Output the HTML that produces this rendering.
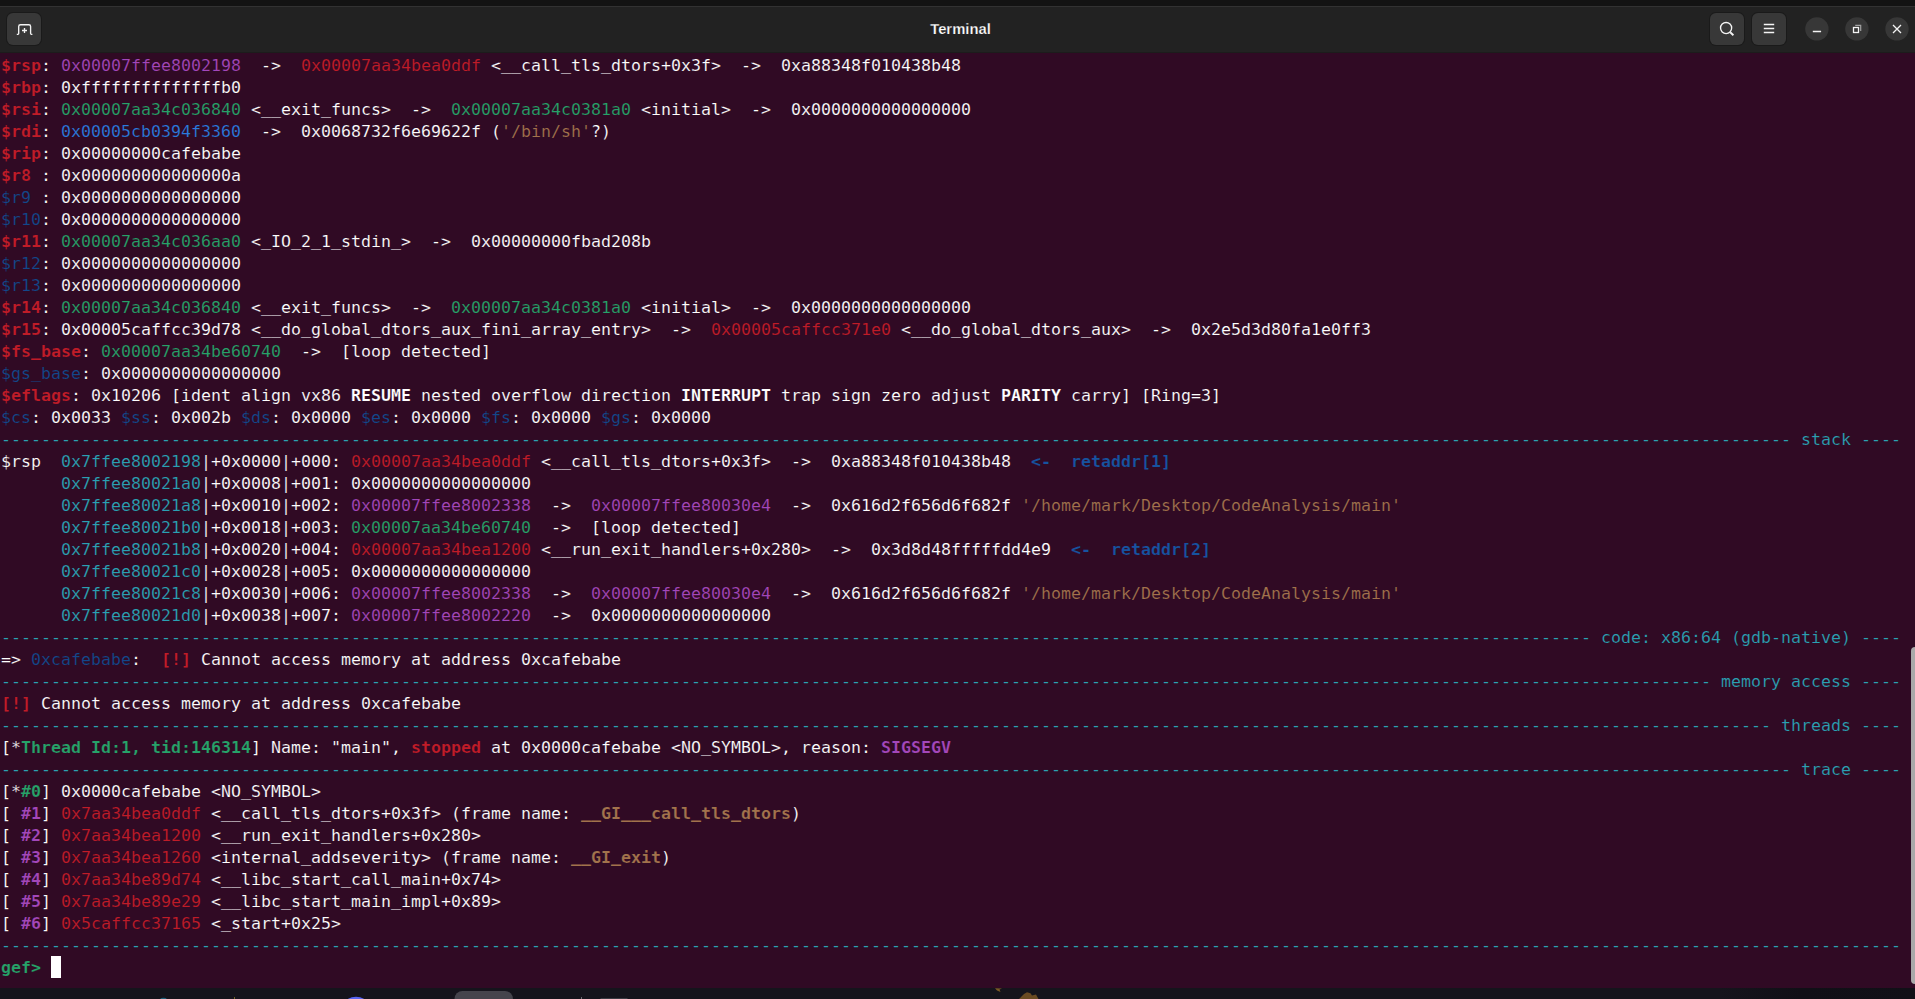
<!DOCTYPE html>
<html lang="en">
<head>
<meta charset="utf-8">
<title>Terminal</title>
<style>
html,body{margin:0;padding:0;}
body{width:1915px;height:999px;overflow:hidden;background:#15141c;position:relative;font-family:"Liberation Sans",sans-serif;}
#top{position:absolute;left:0;top:0;width:1915px;height:6px;background:#131313;}
#hl{position:absolute;left:0;top:6px;width:1915px;height:1px;background:#323232;}
#hdr{position:absolute;left:0;top:7px;width:1915px;height:45px;background:#222222;}
#hb{position:absolute;left:0;top:52px;width:1915px;height:1px;background:#1c1c1c;}
#title{position:absolute;left:0;top:7px;width:1921px;height:45px;line-height:44px;text-align:center;color:#ffffff;font-weight:bold;font-size:14.8px;letter-spacing:0;-webkit-text-stroke:0.25px #222222;}
svg.ic{position:absolute;left:0;top:0;overflow:visible;}
#term{position:absolute;left:0;top:53px;width:1915px;height:935px;background:#300a24;}
#txt{position:absolute;left:1px;top:55px;margin:0;color:#ffffff;font-family:"DejaVu Sans Mono","Liberation Mono",monospace;font-size:16.61px;line-height:22px;white-space:pre;-webkit-text-stroke:0.15px #300a24;}
#txt div{height:22px;}
#txt b{font-weight:bold;}
.R{color:#c01c28;font-weight:bold}
.r{color:#c01c28}
.g{color:#26a269}
.G{color:#26a269;font-weight:bold}
.b{color:#12488b}
.B{color:#1653a0;font-weight:bold}
.l{color:#2a7bde}
.m{color:#a347ba}
.M{color:#a347ba;font-weight:bold}
.c{color:#2aa1b3}
.y{color:#a2734c}
.u{position:relative;top:-1px;-webkit-text-stroke:0}
.Y{color:#a2734c;font-weight:bold}
#cur{position:absolute;left:51px;top:956px;width:10px;height:22px;background:#ffffff;}
#sb{position:absolute;left:1911px;top:647px;width:8px;height:337px;border-radius:4px;background:#a9a9a9;}
#desk{position:absolute;left:0;top:988px;width:1915px;height:11px;background:linear-gradient(90deg,#15141c 0,#15141c 1720px,#100f16 1800px,#111017 1915px);overflow:hidden;}
</style>
</head>
<body>
<div id="top"></div><div id="hl"></div><div id="hdr"></div><div id="hb"></div>
<div id="title">Terminal</div>
<svg class="ic" width="1915" height="53" viewBox="0 0 1915 53" fill="none" stroke="#f4f4f4" stroke-width="1.35" stroke-linecap="butt">
<g stroke="none">
<rect x="6" y="12" width="36" height="34" rx="7" fill="#1a1a1a"/><rect x="7" y="13" width="34" height="32" rx="6" fill="#383838"/>
<rect x="1709" y="12" width="36" height="34" rx="7" fill="#1a1a1a"/><rect x="1710" y="13" width="34" height="32" rx="6" fill="#383838"/>
<rect x="1751" y="12" width="36" height="34" rx="7" fill="#1a1a1a"/><rect x="1752" y="13" width="34" height="32" rx="6" fill="#383838"/>
<circle cx="1816.9" cy="28.9" r="11.7" fill="#373737"/>
<circle cx="1856.9" cy="28.9" r="11.7" fill="#373737"/>
<circle cx="1897" cy="28.9" r="11.7" fill="#373737"/>
</g>
<path d="M16.8 34.3H17.9Q18.7 34.3 18.7 33.5V26.5Q18.7 24.7 20.5 24.7H28.8Q30.6 24.7 30.6 26.5V33.5Q30.6 34.3 31.4 34.3H32.4"/>
<path d="M22 30.5H27M24.5 28V33"/>
<circle cx="1726.1" cy="28" r="5.55"/>
<path d="M1730.2 32.2L1733.4 35.2" stroke-width="1.9"/>
<path d="M1763.8 24.5H1774.2M1763.8 28.5H1774.2M1763.8 32.5H1774.2"/>
<path d="M1812.8 31.5H1821.1" stroke-width="1.5"/>
<path d="M1855.2 25.3H1860.7V30.9" stroke="#a2a2a2" stroke-width="1.2"/>
<rect x="1853.5" y="27.5" width="5" height="5" stroke-width="1.3"/>
<path d="M1893 25L1901 33M1901 25L1893 33" stroke-width="1.3"/>
</svg>
<div id="term"></div>
<div id="txt"><div><span class="R">$rsp</span>: <span class="m">0x00007ffee8002198</span>  -&gt;  <span class="r">0x00007aa34bea0ddf</span> &lt;<span class="u">__</span>call<span class="u">_</span>tls<span class="u">_</span>dtors+0x3f&gt;  -&gt;  0xa88348f010438b48</div><div><span class="R">$rbp</span>: 0xffffffffffffffb0</div><div><span class="R">$rsi</span>: <span class="g">0x00007aa34c036840</span> &lt;<span class="u">__</span>exit<span class="u">_</span>funcs&gt;  -&gt;  <span class="g">0x00007aa34c0381a0</span> &lt;initial&gt;  -&gt;  0x0000000000000000</div><div><span class="R">$rdi</span>: <span class="l">0x00005cb0394f3360</span>  -&gt;  0x0068732f6e69622f (<span class="y">'/bin/sh'</span>?)</div><div><span class="R">$rip</span>: 0x00000000cafebabe</div><div><span class="R">$r8 </span>: 0x000000000000000a</div><div><span class="b">$r9 </span>: 0x0000000000000000</div><div><span class="b">$r10</span>: 0x0000000000000000</div><div><span class="R">$r11</span>: <span class="g">0x00007aa34c036aa0</span> &lt;<span class="u">_</span>IO<span class="u">_</span>2<span class="u">_</span>1<span class="u">_</span>stdin<span class="u">_</span>&gt;  -&gt;  0x00000000fbad208b</div><div><span class="b">$r12</span>: 0x0000000000000000</div><div><span class="b">$r13</span>: 0x0000000000000000</div><div><span class="R">$r14</span>: <span class="g">0x00007aa34c036840</span> &lt;<span class="u">__</span>exit<span class="u">_</span>funcs&gt;  -&gt;  <span class="g">0x00007aa34c0381a0</span> &lt;initial&gt;  -&gt;  0x0000000000000000</div><div><span class="R">$r15</span>: 0x00005caffcc39d78 &lt;<span class="u">__</span>do<span class="u">_</span>global<span class="u">_</span>dtors<span class="u">_</span>aux<span class="u">_</span>fini<span class="u">_</span>array<span class="u">_</span>entry&gt;  -&gt;  <span class="r">0x00005caffcc371e0</span> &lt;<span class="u">__</span>do<span class="u">_</span>global<span class="u">_</span>dtors<span class="u">_</span>aux&gt;  -&gt;  0x2e5d3d80fa1e0ff3</div><div><span class="R">$fs<span class="u">_</span>base</span>: <span class="g">0x00007aa34be60740</span>  -&gt;  [loop detected]</div><div><span class="b">$gs<span class="u">_</span>base</span>: 0x0000000000000000</div><div><span class="R">$eflags</span>: 0x10206 [ident align vx86 <b>RESUME</b> nested overflow direction <b>INTERRUPT</b> trap sign zero adjust <b>PARITY</b> carry] [Ring=3]</div><div><span class="b">$cs</span>: 0x0033 <span class="b">$ss</span>: 0x002b <span class="b">$ds</span>: 0x0000 <span class="b">$es</span>: 0x0000 <span class="b">$fs</span>: 0x0000 <span class="b">$gs</span>: 0x0000</div><div><span class="c">----------------------------------------------------------------------------------------------------------------------------------------------------------------------------------- stack ----</span></div><div>$rsp  <span class="c">0x7ffee8002198</span>|+0x0000|+000: <span class="r">0x00007aa34bea0ddf</span> &lt;<span class="u">__</span>call<span class="u">_</span>tls<span class="u">_</span>dtors+0x3f&gt;  -&gt;  0xa88348f010438b48  <span class="B">&lt;-  retaddr[1]</span></div><div>      <span class="c">0x7ffee80021a0</span>|+0x0008|+001: 0x0000000000000000</div><div>      <span class="c">0x7ffee80021a8</span>|+0x0010|+002: <span class="m">0x00007ffee8002338</span>  -&gt;  <span class="m">0x00007ffee80030e4</span>  -&gt;  0x616d2f656d6f682f <span class="y">'/home/mark/Desktop/CodeAnalysis/main'</span></div><div>      <span class="c">0x7ffee80021b0</span>|+0x0018|+003: <span class="g">0x00007aa34be60740</span>  -&gt;  [loop detected]</div><div>      <span class="c">0x7ffee80021b8</span>|+0x0020|+004: <span class="r">0x00007aa34bea1200</span> &lt;<span class="u">__</span>run<span class="u">_</span>exit<span class="u">_</span>handlers+0x280&gt;  -&gt;  0x3d8d48fffffdd4e9  <span class="B">&lt;-  retaddr[2]</span></div><div>      <span class="c">0x7ffee80021c0</span>|+0x0028|+005: 0x0000000000000000</div><div>      <span class="c">0x7ffee80021c8</span>|+0x0030|+006: <span class="m">0x00007ffee8002338</span>  -&gt;  <span class="m">0x00007ffee80030e4</span>  -&gt;  0x616d2f656d6f682f <span class="y">'/home/mark/Desktop/CodeAnalysis/main'</span></div><div>      <span class="c">0x7ffee80021d0</span>|+0x0038|+007: <span class="m">0x00007ffee8002220</span>  -&gt;  0x0000000000000000</div><div><span class="c">--------------------------------------------------------------------------------------------------------------------------------------------------------------- code: x86:64 (gdb-native) ----</span></div><div>=&gt; <span class="b">0xcafebabe</span>:  <span class="R">[!]</span> Cannot access memory at address 0xcafebabe</div><div><span class="c">--------------------------------------------------------------------------------------------------------------------------------------------------------------------------- memory access ----</span></div><div><span class="R">[!]</span> Cannot access memory at address 0xcafebabe</div><div><span class="c">--------------------------------------------------------------------------------------------------------------------------------------------------------------------------------- threads ----</span></div><div>[*<span class="G">Thread Id:1, tid:146314</span>] Name: "main", <span class="R">stopped</span> at 0x0000cafebabe &lt;NO<span class="u">_</span>SYMBOL&gt;, reason: <span class="M">SIGSEGV</span></div><div><span class="c">----------------------------------------------------------------------------------------------------------------------------------------------------------------------------------- trace ----</span></div><div>[*<span class="G">#0</span>] 0x0000cafebabe &lt;NO<span class="u">_</span>SYMBOL&gt;</div><div>[ <span class="M">#1</span>] <span class="r">0x7aa34bea0ddf</span> &lt;<span class="u">__</span>call<span class="u">_</span>tls<span class="u">_</span>dtors+0x3f&gt; (frame name: <span class="Y"><span class="u">__</span>GI<span class="u">___</span>call<span class="u">_</span>tls<span class="u">_</span>dtors</span>)</div><div>[ <span class="M">#2</span>] <span class="r">0x7aa34bea1200</span> &lt;<span class="u">__</span>run<span class="u">_</span>exit<span class="u">_</span>handlers+0x280&gt;</div><div>[ <span class="M">#3</span>] <span class="r">0x7aa34bea1260</span> &lt;internal<span class="u">_</span>addseverity&gt; (frame name: <span class="Y"><span class="u">__</span>GI<span class="u">_</span>exit</span>)</div><div>[ <span class="M">#4</span>] <span class="r">0x7aa34be89d74</span> &lt;<span class="u">__</span>libc<span class="u">_</span>start<span class="u">_</span>call<span class="u">_</span>main+0x74&gt;</div><div>[ <span class="M">#5</span>] <span class="r">0x7aa34be89e29</span> &lt;<span class="u">__</span>libc<span class="u">_</span>start<span class="u">_</span>main<span class="u">_</span>impl+0x89&gt;</div><div>[ <span class="M">#6</span>] <span class="r">0x5caffcc37165</span> &lt;<span class="u">_</span>start+0x25&gt;</div><div><span class="c">----------------------------------------------------------------------------------------------------------------------------------------------------------------------------------------------</span></div><div><span class="G">gef&gt;</span> </div></div>
<div id="cur"></div>
<div id="sb"></div>
<div id="desk"><svg width="1915" height="11" viewBox="0 988 1915 11" style="position:absolute;left:0;top:0">
<rect x="454.5" y="991" width="58.5" height="20" rx="8" fill="#45444c"/>
<ellipse cx="356" cy="1003.6" rx="11" ry="6.8" fill="#5865f2"/>
<ellipse cx="163.5" cy="1000" rx="3.6" ry="2.2" fill="#1d5d78"/>
<rect x="234" y="997" width="1" height="2" fill="#6d6226"/>
<rect x="581" y="997" width="1" height="3" fill="#6a6a70"/>
<rect x="600.5" y="998" width="27" height="2" fill="#3a3a42"/>
<path d="M995 988.3L1002 988.6L999.5 989.6L1000.5 992L997 990.5Z" fill="#7a5a26"/>
<path d="M1019 999L1024 994L1027 992.3L1030.5 993.2L1032 995.5L1036 994.5L1038.5 999Z" fill="#6b4b22"/>
</svg></div>
</body>
</html>
